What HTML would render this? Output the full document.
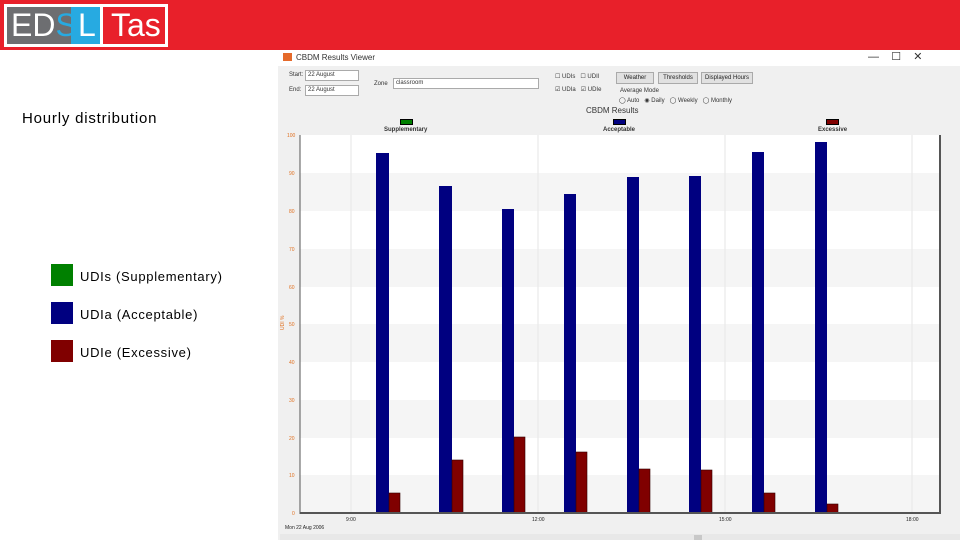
<!DOCTYPE html>
<html><head><meta charset="utf-8"><style>
*{margin:0;padding:0;box-sizing:border-box}
body{width:960px;height:540px;position:relative;overflow:hidden;background:#fff;font-family:"Liberation Sans",sans-serif}
.a{position:absolute}
.leg{position:absolute;left:51px;width:22px;height:22px}
.lt{position:absolute;left:80px;font-size:13px;color:#000;letter-spacing:0.7px}
.s{font-size:6px;color:#333;position:absolute}
.btn{position:absolute;top:72px;height:12px;border:1px solid #aaa;background:#e1e1e1;font-size:6px;text-align:center;line-height:10px;color:#222}
</style></head><body>
<div class="a" style="left:0;top:0;width:960px;height:50px;background:#e8202a"></div>
<div class="a" style="left:4px;top:4px;width:164px;height:43px;background:#fff"></div>
<div class="a" style="left:7px;top:7px;width:64px;height:37px;background:#6d6e71"></div>
<div class="a" style="left:71px;top:7px;width:29px;height:37px;background:#27aae1"></div>
<div class="a" style="left:103px;top:7px;width:62px;height:37px;background:#e8202a"></div>
<div class="a" style="left:11px;top:7px;font-size:32px;color:#fff;line-height:37px">ED<span style="color:#27aae1">S</span></div>
<div class="a" style="left:78px;top:7px;font-size:32px;color:#fff;line-height:37px">L</div>
<div class="a" style="left:111px;top:7px;font-size:32px;color:#fff;line-height:37px">Tas</div>

<div class="a" style="left:22px;top:110px;font-size:15px;letter-spacing:0.8px">Hourly distribution</div>
<div class="leg" style="top:264px;background:#008000"></div><div class="lt" style="top:269px">UDIs (Supplementary)</div>
<div class="leg" style="top:302px;background:#000080"></div><div class="lt" style="top:307px">UDIa (Acceptable)</div>
<div class="leg" style="top:340px;background:#800000"></div><div class="lt" style="top:345px">UDIe (Excessive)</div>

<div class="a" style="left:278px;top:50px;width:682px;height:490px;background:#f0f0f0"></div>
<div class="a" style="left:278px;top:50px;width:682px;height:16px;background:#fff"></div>
<div class="a" style="left:283px;top:53px;width:9px;height:8px;background:#e56a2b"></div>
<div class="s" style="left:296px;top:53px;font-size:8px">CBDM Results Viewer</div>
<div class="s" style="left:868px;top:50px;font-size:11px">—&nbsp;&nbsp;&nbsp;&nbsp;☐&nbsp;&nbsp;&nbsp;&nbsp;✕</div>
<div class="s" style="left:289px;top:72px">Start:</div><div class="a" style="left:305px;top:70px;width:54px;height:11px;background:#fff;border:1px solid #aaa"></div><div class="s" style="left:308px;top:72px">22 August</div>
<div class="s" style="left:289px;top:87px">End:</div><div class="a" style="left:305px;top:85px;width:54px;height:11px;background:#fff;border:1px solid #aaa"></div><div class="s" style="left:308px;top:87px">22 August</div>
<div class="s" style="left:374px;top:81px">Zone</div>
<div class="a" style="left:393px;top:78px;width:146px;height:11px;background:#fff;border:1px solid #aaa"></div><div class="s" style="left:396px;top:80px">classroom</div>
<div class="s" style="left:555px;top:73px">☐ UDIs &nbsp; ☐ UDIl</div>
<div class="s" style="left:555px;top:86px">☑ UDIa &nbsp; ☑ UDIe</div>
<div class="btn" style="left:616px;width:38px">Weather</div>
<div class="btn" style="left:658px;width:40px">Thresholds</div>
<div class="btn" style="left:701px;width:52px">Displayed Hours</div>
<div class="s" style="left:620px;top:88px">Average Mode</div>
<div class="s" style="left:619px;top:97px">◯ Auto &nbsp; ◉ Daily &nbsp; ◯ Weekly &nbsp; ◯ Monthly</div>
<div class="s" style="left:586px;top:106px;font-size:8px">CBDM Results</div>
<div class="a" style="left:400px;top:119px;width:13px;height:6px;background:#008000;border:1px solid #000"></div>
<div class="s" style="left:384px;top:127px;font-weight:bold">Supplementary</div>
<div class="a" style="left:613px;top:119px;width:13px;height:6px;background:#000080;border:1px solid #000"></div>
<div class="s" style="left:603px;top:127px;font-weight:bold">Acceptable</div>
<div class="a" style="left:826px;top:119px;width:13px;height:6px;background:#800000;border:1px solid #000"></div>
<div class="s" style="left:818px;top:127px;font-weight:bold">Excessive</div>

<svg class="a" style="left:0;top:0" width="960" height="540">
<rect x="300" y="135" width="640" height="378" fill="#fff"/>
<g fill="#f5f5f5"><rect x="300" y="173" width="640" height="38"/><rect x="300" y="249" width="640" height="38"/><rect x="300" y="324" width="640" height="38"/><rect x="300" y="400" width="640" height="38"/><rect x="300" y="475" width="640" height="38"/></g>
<g stroke="#e6e6e6"><line x1="351" y1="135" x2="351" y2="513"/><line x1="538" y1="135" x2="538" y2="513"/><line x1="725" y1="135" x2="725" y2="513"/><line x1="912" y1="135" x2="912" y2="513"/></g>
<g fill="#000080">
<rect x="376" y="153" width="13" height="360"/><rect x="439" y="186" width="13" height="327"/><rect x="502" y="209" width="12" height="304"/><rect x="564" y="194" width="12" height="319"/><rect x="627" y="177" width="12" height="336"/><rect x="689" y="176" width="12" height="337"/><rect x="752" y="152" width="12" height="361"/><rect x="815" y="142" width="12" height="371"/></g>
<g fill="#800000" stroke="#300" stroke-width="0.6">
<rect x="389" y="493" width="11" height="20"/><rect x="452" y="460" width="11" height="53"/><rect x="514" y="437" width="11" height="76"/><rect x="576" y="452" width="11" height="61"/><rect x="639" y="469" width="11" height="44"/><rect x="701" y="470" width="11" height="43"/><rect x="764" y="493" width="11" height="20"/><rect x="827" y="504" width="11" height="9"/></g>
<line x1="300" y1="135" x2="300" y2="514" stroke="#555"/>
<line x1="300" y1="513" x2="940" y2="513" stroke="#555" stroke-width="2"/>
<line x1="940" y1="135" x2="940" y2="514" stroke="#555" stroke-width="2"/>
<g font-size="5" fill="#e07020" font-family="Liberation Sans">
<text x="287" y="137">100</text><text x="289" y="175">90</text><text x="289" y="213">80</text><text x="289" y="251">70</text><text x="289" y="289">60</text><text x="289" y="326">50</text><text x="289" y="364">40</text><text x="289" y="402">30</text><text x="289" y="440">20</text><text x="289" y="477">10</text><text x="292" y="515">0</text>
<text x="284" y="330" transform="rotate(-90 284 330)">UDI %</text></g>
<g font-size="5" fill="#222" font-family="Liberation Sans">
<text x="346" y="521">9:00</text><text x="532" y="521">12:00</text><text x="719" y="521">15:00</text><text x="906" y="521">18:00</text>
<text x="285" y="529">Mon 22 Aug 2006</text></g>
<rect x="280" y="534" width="680" height="6" fill="#e8e8e8"/><rect x="694" y="535" width="8" height="5" fill="#c8c8c8"/>
</svg>
</body></html>
